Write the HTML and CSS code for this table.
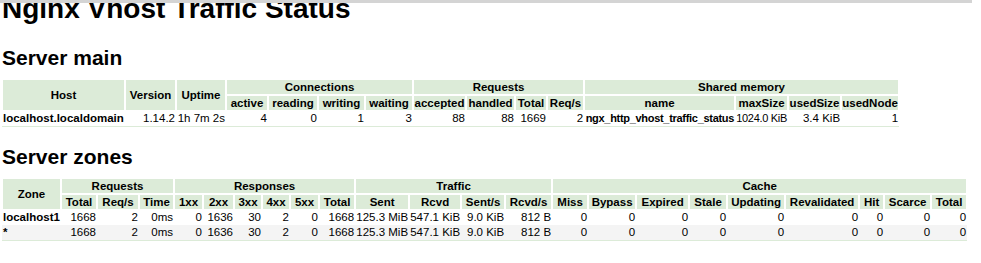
FILE: index.html
```html
<!DOCTYPE html>
<html lang="en">
<head>
<meta charset="utf-8">
<title>Nginx Vhost Traffic Status</title>
<link rel="stylesheet" href="styles.css">
</head>
<body>
<div class="topbar"></div>
<h1>Nginx Vhost Traffic Status</h1>

<h2 class="first">Server main</h2>
<table class="main">
  <colgroup>
    <col><col><col><col><col><col><col><col><col><col><col><col><col><col><col>
  </colgroup>
  <thead>
    <tr>
      <th rowspan="2">Host</th>
      <th rowspan="2">Version</th>
      <th rowspan="2">Uptime</th>
      <th colspan="4">Connections</th>
      <th colspan="4">Requests</th>
      <th colspan="4">Shared memory</th>
    </tr>
    <tr>
      <th>active</th><th>reading</th><th>writing</th><th>waiting</th>
      <th>accepted</th><th>handled</th><th>Total</th><th>Req/s</th>
      <th>name</th><th>maxSize</th><th>usedSize</th><th>usedNode</th>
    </tr>
  </thead>
  <tbody>
    <tr>
      <td class="key">localhost.localdomain</td>
      <td>1.14.2</td>
      <td>1h 7m 2s</td>
      <td>4</td><td>0</td><td>1</td><td>3</td>
      <td>88</td><td>88</td><td>1669</td><td>2</td>
      <td class="bold tight">ngx_http_vhost_traffic_status</td>
      <td class="tight">1024.0 KiB</td>
      <td>3.4 KiB</td>
      <td>1</td>
    </tr>
  </tbody>
</table>

<h2 class="zones">Server zones</h2>
<table class="zonetable">
  <colgroup>
    <col><col><col><col><col><col><col><col><col><col><col><col><col><col><col><col><col><col><col><col><col><col><col>
  </colgroup>
  <thead>
    <tr>
      <th rowspan="2">Zone</th>
      <th colspan="3">Requests</th>
      <th colspan="6">Responses</th>
      <th colspan="4">Traffic</th>
      <th colspan="9">Cache</th>
    </tr>
    <tr>
      <th>Total</th><th>Req/s</th><th>Time</th>
      <th>1xx</th><th>2xx</th><th>3xx</th><th>4xx</th><th>5xx</th><th>Total</th>
      <th>Sent</th><th>Rcvd</th><th>Sent/s</th><th>Rcvd/s</th>
      <th>Miss</th><th>Bypass</th><th>Expired</th><th>Stale</th><th>Updating</th><th>Revalidated</th><th>Hit</th><th>Scarce</th><th>Total</th>
    </tr>
  </thead>
  <tbody>
    <tr>
      <td class="key">localhost1</td>
      <td>1668</td><td>2</td><td>0ms</td>
      <td>0</td><td>1636</td><td>30</td><td>2</td><td>0</td><td>1668</td>
      <td>125.3 MiB</td><td>547.1 KiB</td><td>9.0 KiB</td><td>812 B</td>
      <td>0</td><td>0</td><td>0</td><td>0</td><td>0</td><td>0</td><td>0</td><td>0</td><td>0</td>
    </tr>
    <tr>
      <td class="key">*</td>
      <td>1668</td><td>2</td><td>0ms</td>
      <td>0</td><td>1636</td><td>30</td><td>2</td><td>0</td><td>1668</td>
      <td>125.3 MiB</td><td>547.1 KiB</td><td>9.0 KiB</td><td>812 B</td>
      <td>0</td><td>0</td><td>0</td><td>0</td><td>0</td><td>0</td><td>0</td><td>0</td><td>0</td>
    </tr>
  </tbody>
</table>
</body>
</html>
```

FILE: styles.css
```css
* {
  box-sizing: border-box;
}

html,
body {
  margin: 0;
  background: #ffffff;
}

body {
  padding: 0 2px;
  font-family: "Liberation Sans", Arial, sans-serif;
  font-size: 14px;
  color: #000000;
}

.topbar {
  position: fixed;
  top: 0;
  left: 0;
  width: 972px;
  height: 3px;
  background: #d4d4d4;
}

h1 {
  margin: -7px 0 0;
  font-size: 28px;
  line-height: 32px;
  font-weight: bold;
}

h2 {
  margin: 0 0 9px;
  font-size: 21px;
  line-height: 24px;
  font-weight: bold;
}

h2.first {
  margin-top: 21px;
}

h2.zones {
  margin-top: 18px;
}

table {
  border-collapse: separate;
  border-spacing: 0;
  table-layout: fixed;
  font-size: 11.5px;
}

th {
  padding: 0;
  border: 1px solid #ffffff;
  background: #dcebd8;
  line-height: 14px;
  font-weight: bold;
  text-align: center;
  white-space: nowrap;
}

td {
  padding: 0 1px;
  line-height: 15px;
  text-align: right;
  white-space: nowrap;
}

td.key {
  text-align: left;
  font-weight: bold;
}

td.bold {
  font-weight: bold;
}

td.tight {
  font-size: 11px;
  letter-spacing: -0.3px;
}

tbody tr:nth-child(even) td {
  background: #f4f4f4;
}

tbody tr:last-child td {
  border-bottom: 1px solid #dcebd8;
}

/* Server main column widths */
.main { width: 897px; }
.main col:nth-child(1) { width: 123px; }
.main col:nth-child(2) { width: 51px; }
.main col:nth-child(3) { width: 50px; }
.main col:nth-child(4) { width: 42px; }
.main col:nth-child(5) { width: 50px; }
.main col:nth-child(6) { width: 47px; }
.main col:nth-child(7) { width: 48px; }
.main col:nth-child(8) { width: 53px; }
.main col:nth-child(9) { width: 49px; }
.main col:nth-child(10) { width: 32px; }
.main col:nth-child(11) { width: 37px; }
.main col:nth-child(12) { width: 151px; }
.main col:nth-child(13) { width: 53px; }
.main col:nth-child(14) { width: 53px; }
.main col:nth-child(15) { width: 58px; }

/* Server zones column widths */
.zonetable { width: 965px; }
.zonetable col:nth-child(1) { width: 59px; }
.zonetable col:nth-child(2) { width: 36px; }
.zonetable col:nth-child(3) { width: 42px; }
.zonetable col:nth-child(4) { width: 35px; }
.zonetable col:nth-child(5) { width: 29px; }
.zonetable col:nth-child(6) { width: 31px; }
.zonetable col:nth-child(7) { width: 28px; }
.zonetable col:nth-child(8) { width: 28px; }
.zonetable col:nth-child(9) { width: 29px; }
.zonetable col:nth-child(10) { width: 36px; }
.zonetable col:nth-child(11) { width: 54px; }
.zonetable col:nth-child(12) { width: 52px; }
.zonetable col:nth-child(13) { width: 44px; }
.zonetable col:nth-child(14) { width: 47px; }
.zonetable col:nth-child(15) { width: 36px; }
.zonetable col:nth-child(16) { width: 48px; }
.zonetable col:nth-child(17) { width: 53px; }
.zonetable col:nth-child(18) { width: 38px; }
.zonetable col:nth-child(19) { width: 58px; }
.zonetable col:nth-child(20) { width: 74px; }
.zonetable col:nth-child(21) { width: 25px; }
.zonetable col:nth-child(22) { width: 47px; }
.zonetable col:nth-child(23) { width: 36px; }
```
